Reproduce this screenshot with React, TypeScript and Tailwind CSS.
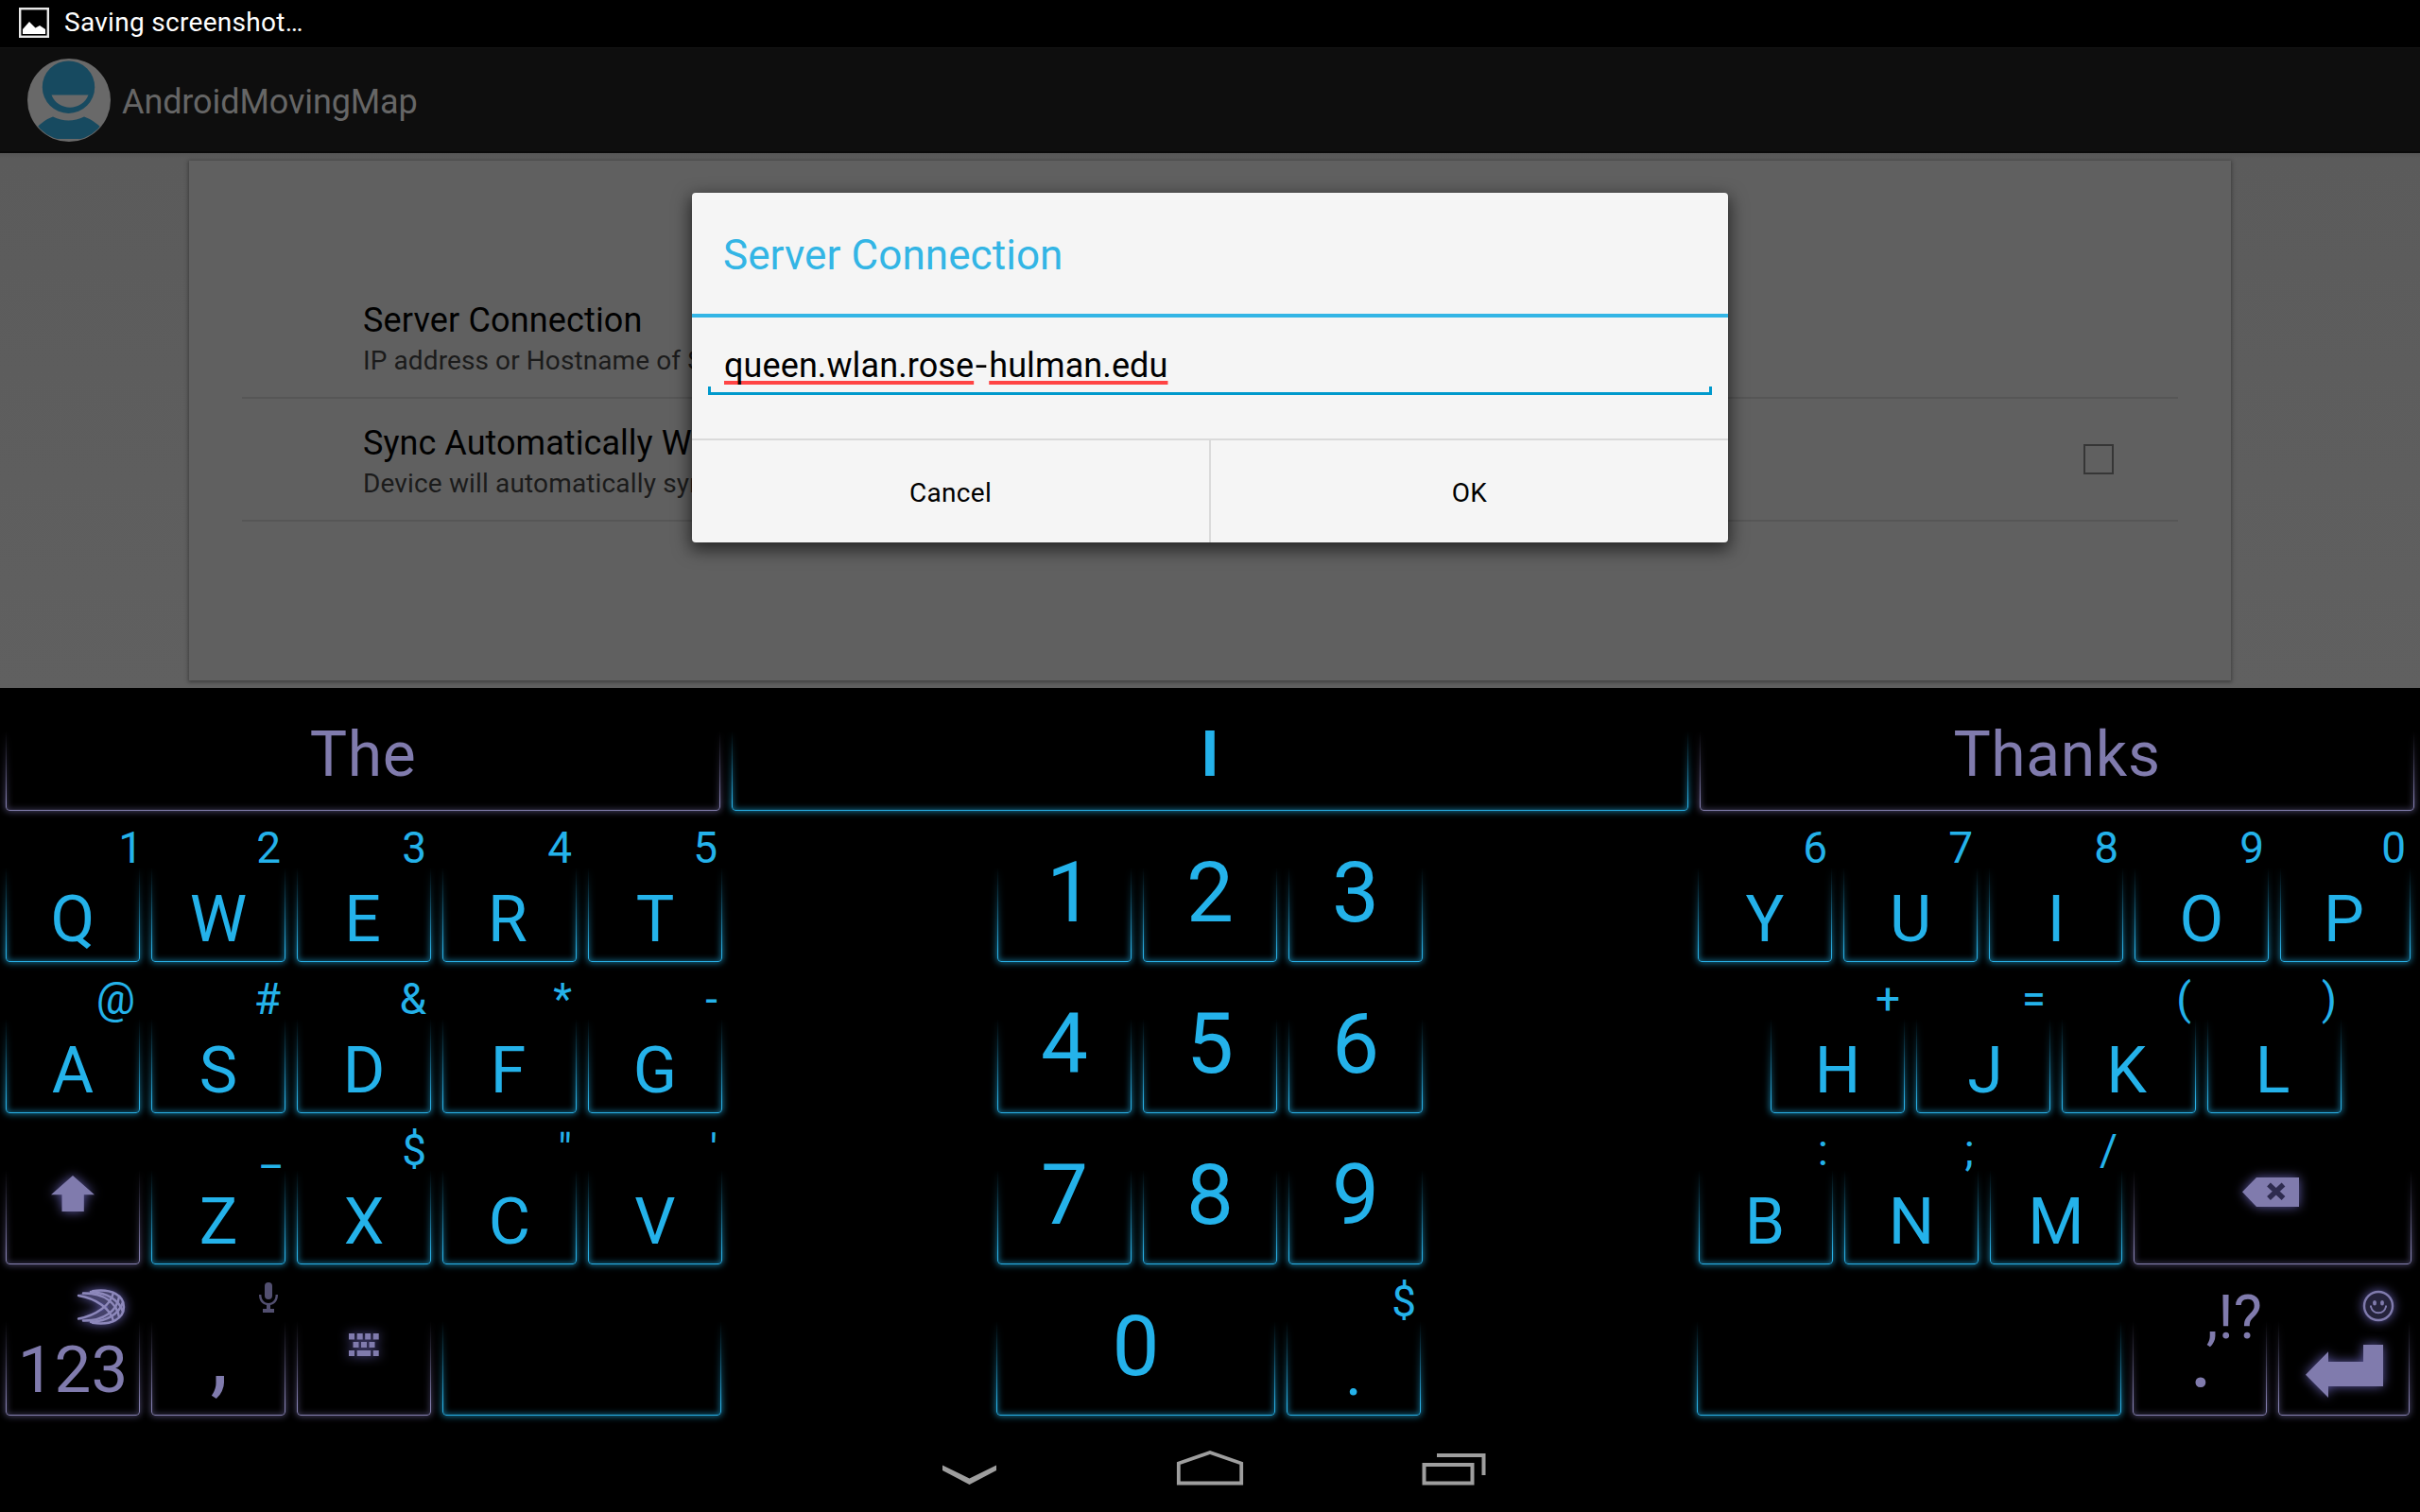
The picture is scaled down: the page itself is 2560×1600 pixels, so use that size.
import type { ReactNode } from "react";

type Tone = "cyan" | "violet";

function Frame({ tone, top }: { tone: Tone; top: string }) {
  return (
    <div
      className={`pointer-events-none absolute -inset-x-[10px] bottom-[-4px] overflow-hidden px-[10px] pb-[10px] [mask-image:linear-gradient(to_bottom,transparent,rgba(0,0,0,0.35)_30%,black_80%)] ${top}`}
    >
      <div
        className={
          tone === "cyan"
            ? "-mt-5 h-[calc(100%+20px)] rounded-b-[4px] border border-[#29b0e6] shadow-[0_0_7px_1px_rgba(28,145,190,0.75),inset_0_0_6px_1px_rgba(28,145,190,0.65)]"
            : "-mt-5 h-[calc(100%+20px)] rounded-b-[4px] border border-[#8580b0] shadow-[0_0_7px_1px_rgba(95,90,135,0.7),inset_0_0_6px_1px_rgba(95,90,135,0.55)]"
        }
      />
    </div>
  );
}

type KeyProps = {
  w?: string;
  tone?: Tone;
  label?: string;
  labelClass?: string;
  hint?: ReactNode;
  children?: ReactNode;
};

const LETTER = "pt-[69px] text-[68px] leading-[80px]";
const DIGIT = "pt-[31px] text-[89px] leading-[100px]";

// Optical centring for glyphs whose ink is off the middle of their advance.
const NUDGE: Record<string, string> = {
  K: "-translate-x-[2.5px]",
  L: "-translate-x-[2px]",
  R: "-translate-x-[2px]",
  E: "-translate-x-[1.5px]",
  F: "-translate-x-[1.5px]",
  P: "-translate-x-[1.5px]",
  B: "-translate-x-[1px]",
  J: "translate-x-[2px]",
  "1": "translate-x-[6px]",
};

function Key({ w = "w-[142px]", tone = "cyan", label, labelClass = LETTER, hint, children }: KeyProps) {
  return (
    <button
      type="button"
      className={`relative flex h-[160px] shrink-0 items-start justify-center ${w} ${tone === "cyan" ? "text-[#24b2ea]" : "text-[#807bad]"}`}
    >
      <Frame tone={tone} top="top-[54px]" />
      {label && <span className={`whitespace-pre ${labelClass} ${NUDGE[label] ?? ""}`}>{label}</span>}
      {hint && (
        <span className={`absolute top-[9px] text-[46px] leading-[48px] ${hint === "1" ? "-right-[3px]" : "right-[5px]"}`}>
          {hint}
        </span>
      )}
      {children}
    </button>
  );
}

function Row({ keys, className = "" }: { keys: [string, string][]; className?: string }) {
  return (
    <div className={`flex gap-3 ${className}`}>
      {keys.map(([l, h]) => (
        <Key key={l} label={l} hint={h} w={l === "P" ? "w-[138px]" : "w-[142px]"} />
      ))}
    </div>
  );
}

const GLOW = "overflow-visible drop-shadow-[0_0_6px_rgba(110,104,190,0.85)]";

function ShiftIcon() {
  return (
    <svg width="46" height="38" viewBox="0 0 46 38" className={`mt-[60px] ${GLOW}`}>
      <path d="M23 0 46 20.3H34.8V38H11.5V20.3H0Z" fill="currentColor" />
    </svg>
  );
}

function SwiftIcon() {
  return (
    <svg width="50" height="36" viewBox="0 0 50 36" className={`absolute left-[76px] top-[21px] ${GLOW}`}>
      <path d="M14 1C34-3 49 5 49 18S34 39 14 35L1 31Q24 26 33 18 24 10 1 5Z" fill="#45426b" />
      <g fill="none" stroke="#8d88bb" strokeWidth="2.4" strokeLinecap="round">
        <path d="M16 1.2C36-2 49 6 49 18S36 38 16 34.800" />
        <path d="M6 3.5C28 3 42 14 44 29" />
        <path d="M1 6C20 9 35 20 38 33" />
        <path d="M6 32.5C28 33 42 22 44 7" />
        <path d="M1 30.5C20 27 35 16 38 3" />
        <path d="M14 2C32 3 44 11 48 23" />
        <path d="M14 34C32 33 44 25 48 13" />
      </g>
    </svg>
  );
}

function MicIcon() {
  return (
    <svg width="20" height="32" viewBox="0 0 20 32" className="absolute right-[8px] top-[13px]" fill="#524f70">
      <rect x="6" y="0" width="8" height="18" rx="4" />
      <path d="M0 13H2.4C2.4 25 17.6 25 17.6 13H20C20 19.5 17 23 12 24V28H16V32H4V28H8V24C3 23 0 19.5 0 13Z" />
    </svg>
  );
}

function KeyboardIcon() {
  return (
    <svg width="32" height="24" viewBox="0 0 32 24" className={`mt-[67px] ${GLOW}`} fill="currentColor">
      <path d="M0 0h6v6.5H0zM8.700 0h6v6.5h-6zM17.200 0h6v6.5h-6zM25.700 0h6v6.500h-6zM4.500 9h6v6h-6zM13 9h6v6h-6zM21.500 9h6v6h-6zM0 18h6v6H0zM8.700 18h14.500v6H8.700zM25.700 18h6v6h-6z" />
    </svg>
  );
}

function BackspaceIcon() {
  return (
    <svg width="60" height="31" viewBox="0 0 60 31" className={`mt-[62px] mr-[4px] ${GLOW}`}>
      <path d="M0 15.300 15 0H60V31H15Z" fill="currentColor" />
      <path d="M28 7.500 43.500 22M43.500 7.500 28 22" stroke="#2e2b4f" strokeWidth="5.500" />
    </svg>
  );
}

function SmileyIcon() {
  return (
    <svg width="34" height="34" viewBox="0 0 34 34" className={`absolute right-[16px] top-[21px] ${GLOW}`}>
      <circle cx="17" cy="17" r="15" fill="#25233c" stroke="currentColor" strokeWidth="2.400" />
      <ellipse cx="13" cy="13.700" rx="2" ry="2.700" fill="currentColor" />
      <ellipse cx="21" cy="13.700" rx="2" ry="2.700" fill="currentColor" />
      <path d="M8 17.500H10M24 17.500H26M9 17.500C11 26.500 23 26.500 25 17.500" fill="none" stroke="currentColor" strokeWidth="1.800" />
    </svg>
  );
}

function EnterIcon() {
  return (
    <svg width="82" height="56" viewBox="0 0 82 56" className={`mt-[79px] ${GLOW}`}>
      <path d="M0 31.700 24 7.300V18H61V0H82V44H24V56Z" fill="currentColor" />
    </svg>
  );
}

function Suggestion({ w, tone, children }: { w: string; tone: Tone; children: ReactNode }) {
  return (
    <div className={`relative flex h-[136px] items-start justify-center pt-[31px] text-[66px] leading-[80px] ${w} ${tone === "cyan" ? "font-bold text-[#24b2ea]" : "tracking-[0.6px] text-[#807bad]"}`}>
      <div className="absolute inset-0">
        <Frame tone={tone} top="top-[46px]" />
      </div>
      <span>{children}</span>
    </div>
  );
}

function Keyboard() {
  return (
    <section className="h-[776px] bg-black">
      <div className="flex h-[136px] gap-3 pl-1.5">
        <Suggestion w="w-[756px]" tone="violet">The</Suggestion>
        <Suggestion w="w-[1012px]" tone="cyan">I</Suggestion>
        <Suggestion w="w-[756px]" tone="violet">Thanks</Suggestion>
      </div>
      <div className="flex pl-1.5">
        <div className="w-[1049px]">
          <Row keys={[["Q", "1"], ["W", "2"], ["E", "3"], ["R", "4"], ["T", "5"]]} />
          <Row keys={[["A", "@"], ["S", "#"], ["D", "&"], ["F", "*"], ["G", "-"]]} />
          <div className="flex gap-3">
            <Key tone="violet"><ShiftIcon /></Key>
            <Row keys={[["Z", "_"], ["X", "$"], ["C", "\""], ["V", "'"]]} />
          </div>
          <div className="flex gap-3">
            <Key tone="violet" label="123" labelClass="pt-[66px] text-[69px] leading-[80px]"><SwiftIcon /></Key>
            <Key tone="violet" label="," labelClass="pt-[49px] pl-[2px] text-[96px] leading-[80px]"><MicIcon /></Key>
            <Key tone="violet"><KeyboardIcon /></Key>
            <Key w="w-[295px]" />
          </div>
        </div>
        <div className="w-[741px]">
          {["123", "456", "789"].map((r) => (
            <div key={r} className="flex gap-3">
              {r.split("").map((d) => (
                <Key key={d} label={d} labelClass={DIGIT} />
              ))}
            </div>
          ))}
          <div className="-ml-px flex gap-3">
            <Key w="w-[295px]" label="0" labelClass={DIGIT} />
            <Key label="." hint="$" />
          </div>
        </div>
        <div>
          <Row keys={[["Y", "6"], ["U", "7"], ["I", "8"], ["O", "9"], ["P", "0"]]} />
          <Row className="pl-[77px]" keys={[["H", "+"], ["J", "="], ["K", "("], ["L", ")"]]} />
          <div className="flex gap-3 pl-px">
            <Key label="B" hint=":" />
            <Key label="N" hint=";" />
            <Key w="w-[140px]" label="M" hint="/" />
            <Key w="w-[294px]" tone="violet"><BackspaceIcon /></Key>
          </div>
          <div className="-ml-px flex gap-3">
            <Key w="w-[449px]" />
            <Key tone="violet" label="." labelClass="pt-[50px] pl-[3px] text-[96px] leading-[80px]">
              <span className="absolute right-[5px] top-[11px] text-[64px] leading-[80px]">,!?</span>
            </Key>
            <Key w="w-[139px]" tone="violet"><EnterIcon /><SmileyIcon /></Key>
          </div>
        </div>
      </div>
    </section>
  );
}

function NavBar() {
  return (
    <nav className="flex h-[96px] items-start bg-black pl-[996px] text-[#9e9e9e]">
      <svg width="60" height="24" viewBox="0 0 60 24" className="mt-[45px]"><path d="M1 1.500 29.500 15.500 58 1.500V7L29.500 22 1 7Z" fill="currentColor" /></svg>
      <svg width="72" height="40" viewBox="0 0 72 40" className="ml-[188px] mt-[29px]"><path d="M2.800 15.500 36 4 69.200 15.500V36.500H2.800Z" fill="none" stroke="currentColor" strokeWidth="3.800" /></svg>
      <svg width="70" height="36" viewBox="0 0 70 36" className="ml-[188px] mt-[33px]" fill="none" stroke="currentColor" strokeWidth="4"><path d="M16 3H65.500V24M2.500 13H53.500V32.500H2.500Z" /></svg>
    </nav>
  );
}

const SPELL =
  "underline decoration-[#ff4444] decoration-4 underline-offset-[4px] [text-decoration-skip-ink:none]";

export default function App() {
  return (
    <div className="relative h-[1600px] w-[2560px] overflow-hidden bg-black font-['Roboto',sans-serif] antialiased">
      <div className="flex h-[50px] items-center bg-black pl-[20px] text-white">
        <svg width="32" height="32" viewBox="0 0 32 32" className="mt-[-2px]">
          <rect x="1.200" y="1.200" width="29.600" height="29.600" fill="none" stroke="#e8e8e8" strokeWidth="2.400" />
          <path d="M4 23 11 15 17.500 21.500 22 19 28 23V28H4Z" fill="#fff" />
        </svg>
        <span className="-mt-[3px] ml-4 text-[28px] leading-[46px] tracking-[0.3px]">Saving screenshot…</span>
      </div>
      <header className="flex h-[112px] items-start border-t border-b-2 border-t-[#131313] border-b-[#090909] bg-[#0e0e0e] pl-[29px]">
        <svg width="88" height="88" viewBox="0 0 88 88" className="mt-[11px]">
          <clipPath id="disc"><circle cx="44" cy="44" r="43" /></clipPath>
          <circle cx="44" cy="44" r="44" fill="#696969" />
          <g fill="#174a60">
            <circle cx="43.500" cy="30.200" r="27.700" />
            <path clipPath="url(#disc)" d="M9 74 Q17 65 27 61.500 Q43.500 69.500 60 61.500 Q70 65 79 74 L66 85H22Z" />
          </g>
          <path d="M25.500 38.500H64.500C58 56 32 56 25.500 38.500Z" fill="#696969" />
        </svg>
        <h1 className="ml-3 mt-[33px] text-[36px] leading-[48px] tracking-[-0.1px] text-[#666]">AndroidMovingMap</h1>
      </header>
      <main className="h-[566px] bg-[linear-gradient(#555,#5b5b5b_5px,#606060)] px-[200px] pt-2">
        <div className="h-[550px] w-[2160px] bg-[#606060] px-14 shadow-[0_1px_4px_1px_rgba(0,0,0,0.35)]">
          <ul className="pt-[122px]">
            <li className="flex h-[130px] flex-col border-b-2 border-[#565656] pl-[128px] pt-[23px]">
              <span className="text-[36px] leading-[48px] tracking-[0.15px] text-black">Server Connection</span>
              <span className="text-[28px] leading-[38px] tracking-[0.1px] text-[#1b1b1b]">IP address or Hostname of Server</span>
            </li>
            <li className="flex h-[130px] items-start justify-between border-b-2 border-[#565656] pl-[128px] pr-[68px] pt-[23px]">
              <span className="flex flex-col">
                <span className="text-[36px] leading-[48px] tracking-[0.05px] text-black">Sync Automatically When</span>
                <span className="text-[28px] leading-[38px] tracking-[0.15px] text-[#1b1b1b]">Device will automatically sync</span>
              </span>
              <span className="mt-[25px] size-8 border-2 border-[#363636]" />
            </li>
          </ul>
        </div>
      </main>
      <div role="dialog" className="absolute left-[732px] top-[204px] h-[370px] w-[1096px] rounded-[4px] bg-[#f5f5f5] shadow-[0_6px_18px_2px_rgba(0,0,0,0.6)]">
        <h2 className="h-[132px] border-b-4 border-[#33b5e5] pl-[33px] pt-[36px] text-[44px] leading-[60px] tracking-[0.08px] text-[#33b5e5]">Server Connection</h2>
        <div className="h-[128px] px-[17px]">
          <div className="relative h-[82px] border-b-3 border-[#0099cc] pl-[17px] pt-[27px] text-[36px] leading-[48px] tracking-[0.1px] text-black">
            <span className={SPELL}>queen.wlan.rose</span>
            <span className="inline-block scale-x-125 px-[3px]">-</span>
            <span className={SPELL}>hulman.edu</span>
            <span className="absolute bottom-0 left-0 h-1.5 w-[3px] bg-[#0099cc]" />
            <span className="absolute bottom-0 right-0 h-1.5 w-[3px] bg-[#0099cc]" />
          </div>
        </div>
        <div className="flex h-[110px] border-t-2 border-[#dadada] text-[28px] tracking-[0.3px] text-black">
          <button type="button" className="w-[549px] border-r-2 border-[#dadada] pt-[3px]">Cancel</button>
          <button type="button" className="flex-1 pt-[3px]">OK</button>
        </div>
      </div>
      <Keyboard />
      <NavBar />
    </div>
  );
}
